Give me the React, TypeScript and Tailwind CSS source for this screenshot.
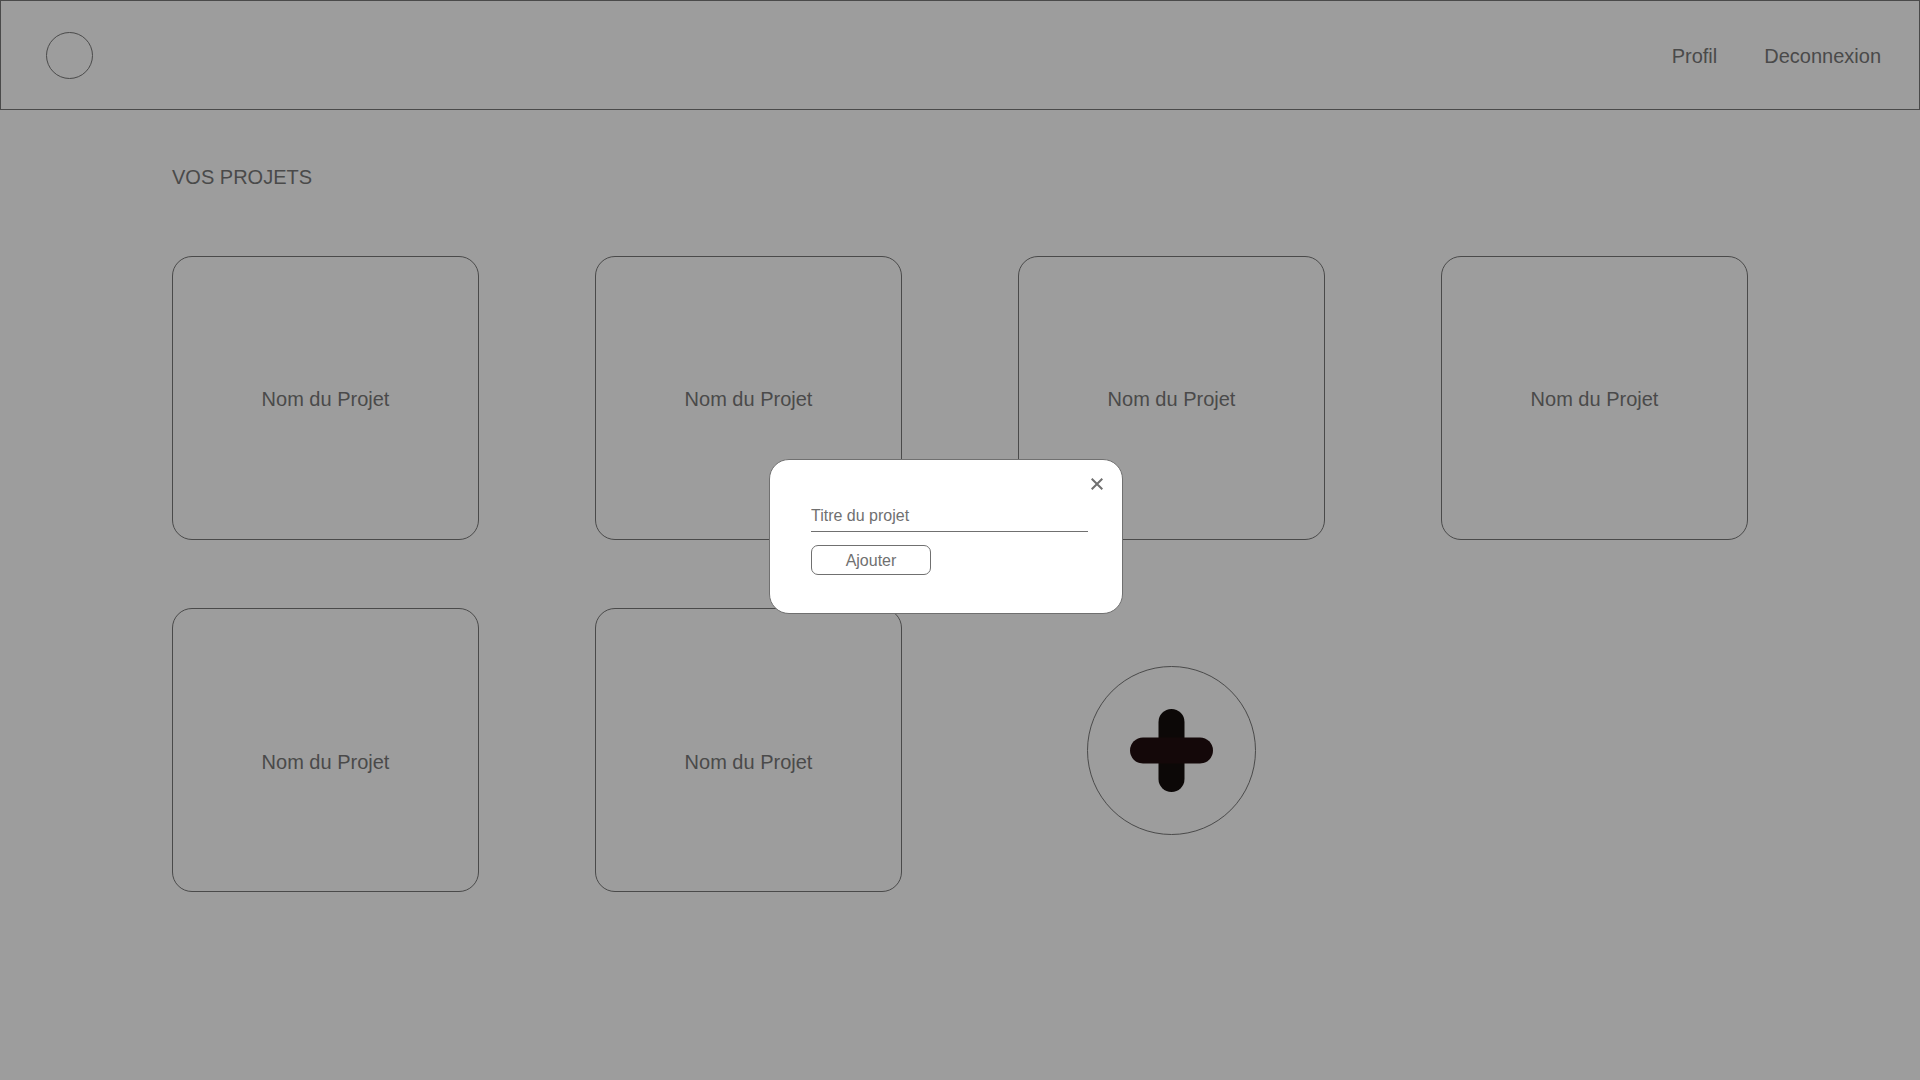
import React from "react";

const firstRow = ["p1", "p2", "p3", "p4"];
const secondRow = ["p5", "p6"];

function ProjectCard({ low = false }: { low?: boolean }) {
  return (
    <button
      type="button"
      className={
        "flex h-[284px] w-full items-center justify-center rounded-[20px] border border-[#4a4a4a] text-xl " +
        (low ? "pt-6" : "pt-0.5")
      }
    >
      Nom du Projet
    </button>
  );
}

function PlusIcon() {
  return (
    <svg width="83" height="83" viewBox="0 0 83 83" aria-hidden="true">
      <rect x="28.5" y="0" width="26" height="83" rx="13" fill="#0c0807" />
      <rect x="0" y="28.5" width="83" height="26" rx="13" fill="#140809" />
    </svg>
  );
}

function CloseIcon() {
  return (
    <svg width="12" height="12" viewBox="0 0 12 12" aria-hidden="true">
      <path d="M0.7 0.7 11.3 11.3M11.3 0.7 0.7 11.3" stroke="#707070" strokeWidth="2" fill="none" />
    </svg>
  );
}

function AddProjectDialog() {
  return (
    <div className="fixed inset-0 flex items-center justify-center pr-7 pb-2">
      <div
        role="dialog"
        aria-modal="true"
        aria-label="Nouveau projet"
        className="relative w-[354px] rounded-[20px] border border-[#707070] bg-white pt-10 pr-[34px] pb-[38px] pl-[41px] text-[#707070]"
      >
        <button
          type="button"
          aria-label="Fermer"
          className="absolute top-3 right-[13px] flex size-6 items-center justify-center"
        >
          <CloseIcon />
        </button>
        <form onSubmit={(e) => e.preventDefault()}>
          <input
            type="text"
            aria-label="Titre du projet"
            placeholder="Titre du projet"
            className="block h-8 w-full border-b border-[#707070] bg-transparent pt-0.5 text-base outline-none placeholder:text-[#707070]"
          />
          <button
            type="submit"
            className="mt-[13px] flex h-[30px] w-[120px] items-center justify-center rounded-[7px] border border-[#707070] pt-0.5 text-base"
          >
            Ajouter
          </button>
        </form>
      </div>
    </div>
  );
}

export default function App() {
  return (
    <div className="min-h-screen bg-[#9d9d9d] font-['Liberation_Sans',Arial,sans-serif] text-[#4a4a4a]">
      <header className="flex h-[110px] items-center justify-between border border-[#4a4a4a] pr-[38px] pl-[45px]">
        <a href="#" aria-label="Accueil" className="size-[47px] rounded-full border border-[#4a4a4a]" />
        <nav className="flex gap-[47px] pt-0.5 text-xl">
          <a href="#profil">Profil</a>
          <a href="#deconnexion">Deconnexion</a>
        </nav>
      </header>
      <main className="px-[172px] pt-[53px]">
        <h1 className="text-xl">VOS PROJETS</h1>
        <div className="mt-[65px] grid grid-cols-4 gap-x-[116px] gap-y-[68px]">
          {firstRow.map((id) => (
            <ProjectCard key={id} />
          ))}
          {secondRow.map((id) => (
            <ProjectCard key={id} low />
          ))}
          <div className="flex items-center justify-center">
            <button
              type="button"
              aria-label="Ajouter un projet"
              className="flex size-[169px] items-center justify-center rounded-full border border-[#4a4a4a]"
            >
              <PlusIcon />
            </button>
          </div>
        </div>
      </main>
      <AddProjectDialog />
    </div>
  );
}
